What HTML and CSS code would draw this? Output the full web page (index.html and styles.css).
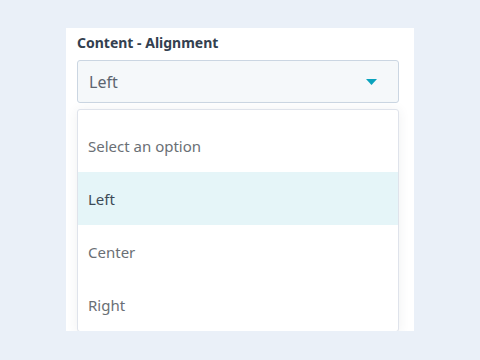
FILE: index.html
```html
<!DOCTYPE html>
<html lang="en">
<head>
    <meta charset="UTF-8">
    <title>Content - Alignment</title>
    <link rel="stylesheet" href="styles.css">
</head>
<body>
    <div class="panel">
        <label class="field-label">Content - Alignment</label>

        <div class="select-box">
            <span class="select-value">Left</span>
            <svg class="caret" width="11" height="6" viewBox="0 0 11 6">
                <path d="M0 0 H11 L5.5 6 Z" fill="#0aa3bd"/>
            </svg>
        </div>

        <ul class="dropdown">
            <li class="option">Select an option</li>
            <li class="option active">Left</li>
            <li class="option">Center</li>
            <li class="option">Right</li>
        </ul>
    </div>
</body>
</html>
```

FILE: styles.css
```css
body {
    font-family: "Noto Sans", "Open Sans", sans-serif;
    background: #eaf0f8;
    margin: 0;
    padding: 28px 0 0 66px;
}

.panel {
    width: 348px;
    height: 303px;
    background: #fff;
    padding: 5px 0 0 11px;
    box-sizing: border-box;
    overflow: hidden;
}

.field-label {
    display: block;
    font-size: 14px;
    font-weight: bold;
    color: #33404f;
    line-height: 20px;
    margin-bottom: 7px;
}

.select-box {
    width: 322px;
    height: 43px;
    box-sizing: border-box;
    background: #f5f8fa;
    border: 1px solid #cbd6e2;
    border-radius: 3px;
    display: flex;
    align-items: center;
    justify-content: space-between;
    padding: 0 21px 0 11px;
}

.select-value {
    font-size: 16px;
    color: #5c6570;
}

.caret {
    display: block;
}

.dropdown {
    list-style: none;
    margin: 6px 0 0;
    padding: 9px 0 0;
    width: 322px;
    box-sizing: border-box;
    border: 1px solid #dfe3eb;
    border-radius: 3px;
    background: #fff;
    box-shadow: 0 1px 12px rgba(45, 62, 80, 0.08);
}

.option {
    height: 53px;
    display: flex;
    align-items: center;
    padding-left: 10px;
    font-size: 15px;
    color: #6a6f75;
}

.option.active {
    background: #e5f5f8;
    color: #3d4a57;
}
```
